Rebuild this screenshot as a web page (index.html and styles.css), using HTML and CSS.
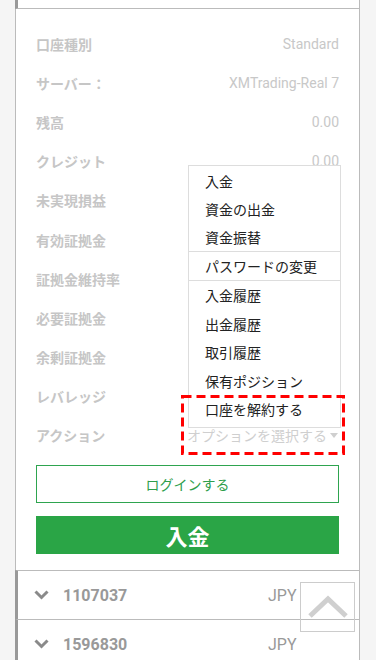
FILE: index.html
```html
<!doctype html>
<html>
<head>
<meta charset="utf-8">
<title>口座情報</title>
<link rel="stylesheet" href="styles.css">
</head>
<body>
<div class="card">
    <div class="prev"></div>

    <div class="details">
        <ul class="info">
            <li><span class="label">口座種別</span><span class="value">Standard</span></li>
            <li><span class="label">サーバー：</span><span class="value">XMTrading-Real 7</span></li>
            <li><span class="label">残高</span><span class="value">0.00</span></li>
            <li><span class="label">クレジット</span><span class="value">0.00</span></li>
            <li><span class="label">未実現損益</span><span class="value">0.00</span></li>
            <li><span class="label">有効証拠金</span><span class="value">0.00</span></li>
            <li><span class="label">証拠金維持率</span><span class="value">0.00</span></li>
            <li><span class="label">必要証拠金</span><span class="value">0.00</span></li>
            <li><span class="label">余剰証拠金</span><span class="value">0.00</span></li>
            <li><span class="label">レバレッジ</span><span class="value">1:1000</span></li>
            <li><span class="label">アクション</span><span class="select">オプションを選択する<i class="caret"></i></span></li>
        </ul>
        <a class="btn login" href="javascript:;">ログインする</a>
        <a class="btn deposit" href="javascript:;">入金</a>
    </div>

    <!-- 開いたアクションメニュー -->
    <ul class="menu">
        <li>入金</li>
        <li>資金の出金</li>
        <li>資金振替</li>
        <li class="sep">パスワードの変更</li>
        <li class="sep">入金履歴</li>
        <li>出金履歴</li>
        <li>取引履歴</li>
        <li>保有ポジション</li>
        <li>口座を解約する</li>
    </ul>
    <svg class="mark" width="164" height="60" viewBox="0 0 164 60"><rect x="1.5" y="1.5" width="161" height="57" fill="none" stroke="#f00" stroke-width="3" stroke-dasharray="9 5"/></svg>

    <div class="account">
        <svg class="chev" width="15" height="10" viewBox="0 0 15 10"><path d="M1.5 1.5 L7.5 7.5 L13.5 1.5" fill="none" stroke="#8a8a8a" stroke-width="3"/></svg>
        <span class="num">1107037</span>
        <span class="cur">JPY</span>
    </div>
    <div class="account">
        <svg class="chev" width="15" height="10" viewBox="0 0 15 10"><path d="M1.5 1.5 L7.5 7.5 L13.5 1.5" fill="none" stroke="#8a8a8a" stroke-width="3"/></svg>
        <span class="num">1596830</span>
        <span class="cur">JPY</span>
    </div>
</div>

<a class="totop" href="javascript:;">
    <svg width="42" height="26" viewBox="0 0 42 26"><path d="M3 22 L21 5 L39 22" fill="none" stroke="#cfcfcf" stroke-width="5"/></svg>
</a>
</body>
</html>
```

FILE: styles.css
```css
ul{
    margin:0;
    padding:0;
    }
li{
    list-style:none;
    }
a{
    text-decoration:none;
}
body{
    margin:0;
    background:#f5f5f5;
    font-family:Roboto, "Noto Sans CJK JP", sans-serif;
    font-size:14px;
    }
.card{
    width:345px;
    min-height:660px;
    margin-left:15px;
    box-sizing:border-box;
    background:#fff;
    border-left:1px solid #bbb;
    border-right:1px solid #bbb;
    position:relative;
    }
.prev{
    height:8px;
    margin-left:-1px;
    border-left:3px solid #999;
    border-bottom:1px solid #bbb;
    }
.details{
    padding:15px 20px 16px;
    }
.info li{
    height:39.2px;
    display:flex;
    align-items:center;
    justify-content:space-between;
    }
.label{
    color:#c6c6c6;
    font-weight:bold;
    font-family:"Noto Sans CJK JP", sans-serif;
    }
.value{
    color:#c8c8c8;
    }
.select{
    width:152px;
    display:flex;
    align-items:center;
    justify-content:space-between;
    color:#cfcfcf;
    font-family:"Noto Sans CJK JP", sans-serif;
    }
.caret{
    width:0;
    height:0;
    border-left:4px solid transparent;
    border-right:4px solid transparent;
    border-top:5px solid #cfcfcf;
    margin-right:1px;
    }
.btn{
    display:flex;
    align-items:center;
    justify-content:center;
    height:38px;
    box-sizing:border-box;
    font-family:"Noto Sans CJK JP", sans-serif;
    }
.login{
    margin-top:10px;
    border:1px solid #2ea44f;
    color:#2e9e4c;
    }
.deposit{
    margin-top:13px;
    background:#2aa546;
    color:#fff;
    font-size:22px;
    font-weight:bold;
    }
.menu{
    position:absolute;
    left:172px;
    top:165px;
    width:153px;
    box-sizing:border-box;
    padding:1px 0 3px;
    background:#fff;
    border:1px solid #ddd;
    color:#222;
    font-family:"Noto Sans CJK JP", sans-serif;
    z-index:10;
    }
.menu li{
    height:28px;
    line-height:28px;
    padding-left:16px;
    }
.menu .sep{
    border-top:1px solid #ddd;
    }
.menu .sep ~ li{
    height:28.5px;
    line-height:28.5px;
    }
.mark{
    position:absolute;
    left:165px;
    top:395px;
    z-index:11;
    }
.account{
    height:48px;
    margin-left:-1px;
    border-left:3px solid #999;
    border-top:1px solid #bbb;
    display:flex;
    align-items:center;
    padding-left:16px;
    color:#999;
    font-size:16px;
    }
.num{
    flex:1;
    margin-left:14px;
    font-weight:bold;
    }
.cur{
    width:91px;
    }
.totop{
    position:absolute;
    left:300px;
    top:582px;
    width:55px;
    height:50px;
    box-sizing:border-box;
    border:1px solid #ccc;
    display:flex;
    justify-content:center;
    padding-top:11px;
    }
```
